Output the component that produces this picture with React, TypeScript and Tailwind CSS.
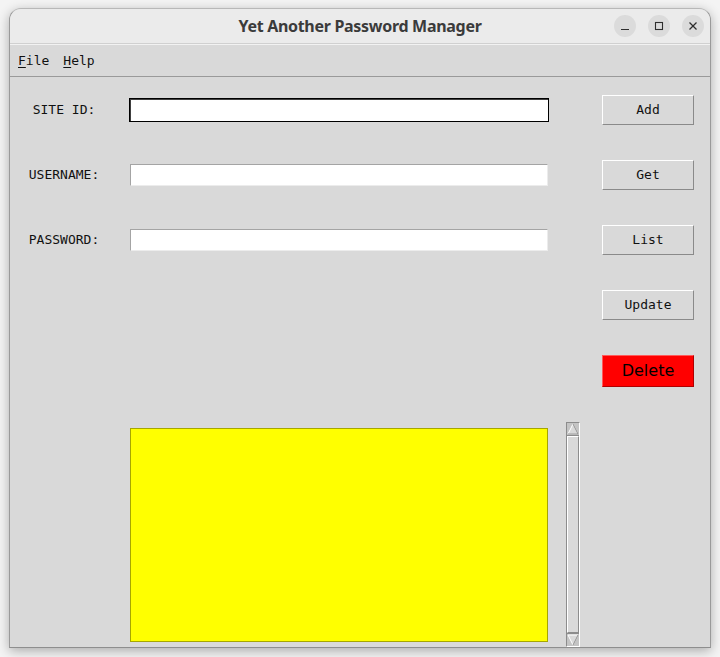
import React from "react";

const mono = { fontFamily: '"DejaVu Sans Mono", "Liberation Mono", monospace' };

function TkButton({ label, danger }: { label: string; danger?: boolean }) {
  if (danger) {
    return (
      <div
        className="mt-[2px] w-[92px] h-[32px] flex items-center justify-center bg-[#ff0000] border border-t-[#ff5a5a] border-l-[#ff5a5a] border-r-[#b00000] border-b-[#b00000] text-[16px] text-black"
        style={{ fontFamily: '"DejaVu Sans", "Liberation Sans", sans-serif' }}
      >
        {label}
      </div>
    );
  }
  return (
    <div
      className="w-[92px] h-[30px] flex items-center justify-center bg-[#d9d9d9] border border-t-white border-l-white border-r-[#8a8a8a] border-b-[#8a8a8a] text-[13px] text-[#111]"
      style={mono}
    >
      {label}
    </div>
  );
}

function Row({
  label,
  entry,
  focused,
  button,
}: {
  label?: string;
  entry?: boolean;
  focused?: boolean;
  button: React.ReactNode;
}) {
  return (
    <div className="h-[65px] grid grid-cols-[108px_484px_92px] items-center">
      <div className="text-center text-[13px] text-[#111]" style={mono}>
        {label}
      </div>
      <div>
        {entry &&
          (focused ? (
            <div className="ml-[11px] w-[420px] h-[24px] border border-black bg-white">
              <div className="w-full h-full border-t border-l border-[#404040]" />
            </div>
          ) : (
            <div className="ml-[12px] w-[418px] h-[22px] bg-white border-t border-l border-[#a4a4a4] border-r border-b border-r-[#ececec] border-b-[#ececec]" />
          ))}
      </div>
      <div>{button}</div>
    </div>
  );
}

function Scrollbar() {
  return (
    <div className="ml-[18px] mt-[20px] w-[14px] h-[225px] flex flex-col border border-[#8c8c8c] border-r-white border-b-white bg-[#d9d9d9]">
      <div className="h-[13px] border-b border-[#8c8c8c] bg-[#c4c4c4] flex items-center justify-center">
        <svg width="12" height="12" viewBox="0 0 12 12">
          <polygon points="6,1 11,11 1,11" fill="#d9d9d9" stroke="white" strokeWidth="1" />
          <line x1="6" y1="1" x2="11" y2="11" stroke="#8c8c8c" />
          <line x1="1" y1="11" x2="11" y2="11" stroke="#8c8c8c" />
        </svg>
      </div>
      <div className="flex-1 border border-white border-r-[#8c8c8c] border-b-[#8c8c8c] bg-[#d9d9d9]" />
      <div className="h-[13px] border-t border-[#8c8c8c] bg-[#c4c4c4] flex items-center justify-center">
        <svg width="12" height="12" viewBox="0 0 12 12">
          <polygon points="1,1 11,1 6,11" fill="#d9d9d9" stroke="white" strokeWidth="1" />
          <line x1="11" y1="1" x2="6" y2="11" stroke="#8c8c8c" />
        </svg>
      </div>
    </div>
  );
}

export default function App() {
  return (
    <div className="w-[720px] h-[657px] bg-[#f4f4f4] overflow-hidden">
      <div className="ml-[9px] mt-[8px] w-[702px] h-[640px] rounded-t-[12px] border border-[#b8b8b8] border-b-[#8e8e8e] border-l-[#9a9a9a] border-r-[#9a9a9a] bg-[#d9d9d9] shadow-[0_3px_12px_rgba(0,0,0,0.3)] flex flex-col overflow-hidden">
        {/* title bar */}
        <div className="h-[35px] bg-[#ebebeb] border-b border-[#d0d0d0] flex items-center relative">
          <div
            className="flex-1 text-center text-[16px] font-bold text-[#3b3b3b] tracking-[-0.3px]"
            style={{ fontFamily: '"Noto Sans", "Liberation Sans", sans-serif' }}
          >
            Yet Another Password Manager
          </div>
          <div className="absolute right-[6px] top-[6px] flex gap-[12px]">
            <div className="w-[22px] h-[22px] rounded-full bg-[#dbdbdb] flex items-center justify-center">
              <svg width="10" height="10" viewBox="0 0 10 10">
                <line x1="1" y1="8.5" x2="9" y2="8.5" stroke="#2e2e2e" strokeWidth="1.2" />
              </svg>
            </div>
            <div className="w-[22px] h-[22px] rounded-full bg-[#dbdbdb] flex items-center justify-center">
              <svg width="10" height="10" viewBox="0 0 10 10">
                <rect x="1.5" y="1.5" width="7" height="7" fill="none" stroke="#2e2e2e" strokeWidth="1.1" />
              </svg>
            </div>
            <div className="w-[22px] h-[22px] rounded-full bg-[#dbdbdb] flex items-center justify-center">
              <svg width="10" height="10" viewBox="0 0 10 10">
                <line x1="1.5" y1="1.5" x2="8.5" y2="8.5" stroke="#2e2e2e" strokeWidth="1.3" />
                <line x1="8.5" y1="1.5" x2="1.5" y2="8.5" stroke="#2e2e2e" strokeWidth="1.3" />
              </svg>
            </div>
          </div>
        </div>
        {/* menu bar */}
        <div
          className="h-[33px] border-t border-[#f2f2f2] border-b border-b-[#9a9a9a] bg-[#d9d9d9] flex items-center pl-[8px] gap-[14px] text-[13px] text-[#111]"
          style={mono}
        >
          <span>
            <span className="underline underline-offset-[2px]">F</span>ile
          </span>
          <span>
            <span className="underline underline-offset-[2px]">H</span>elp
          </span>
        </div>
        {/* content */}
        <div className="flex flex-col">
          <Row label="SITE ID:" entry focused button={<TkButton label="Add" />} />
          <Row label="USERNAME:" entry button={<TkButton label="Get" />} />
          <Row label="PASSWORD:" entry button={<TkButton label="List" />} />
          <Row button={<TkButton label="Update" />} />
          <Row button={<TkButton label="Delete" danger />} />
          <div className="flex">
            <div className="ml-[120px] mt-[26px] w-[418px] h-[214px] bg-[#ffff00] border border-[#a6a600]" />
            <Scrollbar />
          </div>
        </div>
      </div>
    </div>
  );
}
